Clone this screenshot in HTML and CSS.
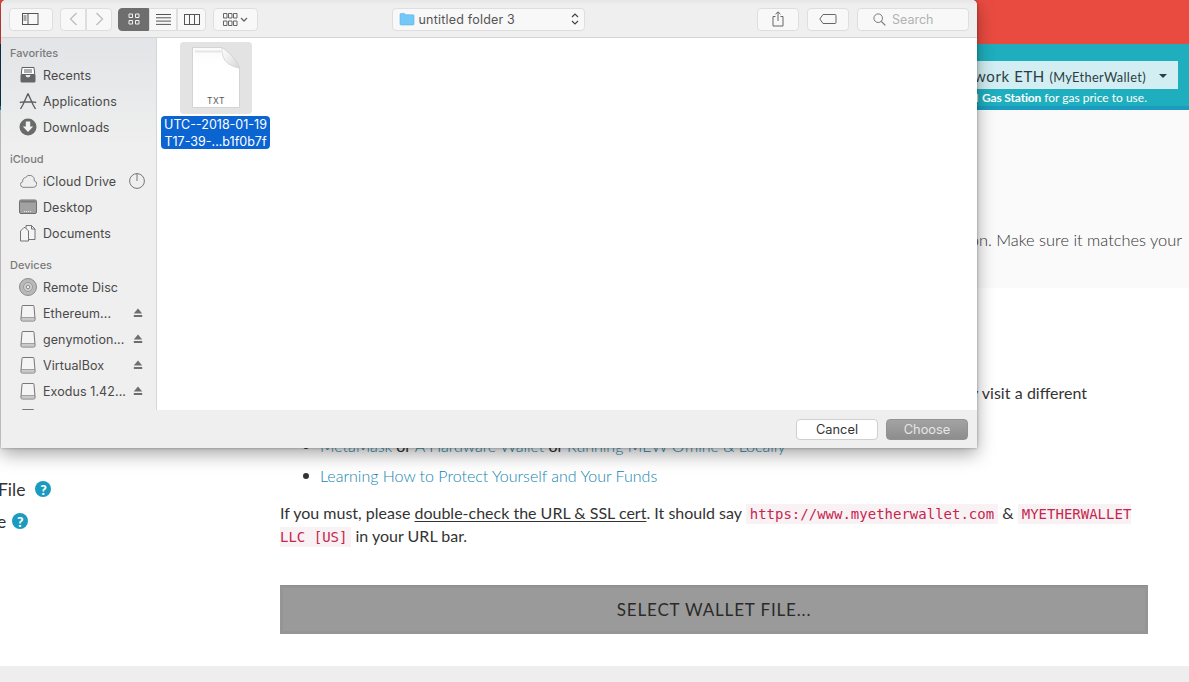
FILE: index.html
```html
<!DOCTYPE html>
<html lang="en">
<head>
<meta charset="utf-8">
<title>MyEtherWallet - Choose file</title>
<link rel="stylesheet" href="styles.css">
</head>
<body>
<svg class="defs" width="0" height="0" aria-hidden="true">
  <symbol id="disk" viewBox="0 0 18 18">
    <path d="M4 1.500h10a1 1 0 0 1 1 1l1.100 13a1.500 1.500 0 0 1-1.500 1.500H3.400a1.500 1.500 0 0 1-1.500-1.500l1.100-13a1 1 0 0 1 1-1z" fill="#f4f4f4" stroke="#777" stroke-width="1"/>
    <path d="M2 13.500h14M2 15h14" stroke="#8a8a8a" stroke-width=".8" fill="none"/>
  </symbol>
  <symbol id="eject" viewBox="0 0 10 10">
    <path d="M5 .5 9.200 5.600H.8z" fill="#6e6e6e"/><rect x=".8" y="7" width="8.400" height="2" fill="#6e6e6e"/>
  </symbol>
</svg>

<div class="page">
  <header class="top-red"></header>
  <section class="band">
    <div class="network"><span class="network-name">Network ETH <small>(MyEtherWallet)</small></span><span class="caret"></span></div>
    <p class="gas">Visit ETH <b>Gas Station</b> for gas price to use.</p>
  </section>
  <section class="notice">
    <p>Always check the URL of this application. Make sure it matches your</p>
  </section>
  <main class="main">
    <div class="options">
      <div class="option first">File <span class="help">?</span></div>
      <div class="option second">e <span class="help">?</span></div>
    </div>
    <div class="warning">
      <h4 class="warning-title">This is not a recommended way to access your wallet.</h4>
      <p class="warning-lead">Entering your private key on a website is dangerous. If a website is compromised or you accidentally visit a different website, your funds will be stolen. Please consider:</p>
      <ul class="warning-list">
        <li><a href="#">MetaMask</a> or <a href="#">A Hardware Wallet</a> or <a href="#">Running MEW Offline &amp; Locally</a></li>
        <li><a href="#">Learning How to Protect Yourself and Your Funds</a></li>
      </ul>
      <p class="warning-note">If you must, please <u>double-check the URL &amp; SSL cert</u>. It should say <code>https://www.myetherwallet.com</code> &amp; <code>MYETHERWALLET LLC [US]</code> in your URL bar.</p>
      <button class="select-file" type="button">SELECT WALLET FILE...</button>
    </div>
  </main>
  <footer class="foot"></footer>
</div>

<div class="dialog">
  <div class="toolbar">
    <div class="tool-left">
      <button class="tb sidebar-toggle" type="button"><svg width="18" height="13" viewBox="0 0 18 13"><rect x=".5" y=".5" width="15.500" height="11" fill="none" stroke="#555"/><path d="M6 .5v11M1.500 3h3M1.500 5h3M1.500 7h3" stroke="#555" fill="none"/></svg></button>
      <div class="tb-group nav">
        <button class="tb seg" type="button"><svg width="9" height="14" viewBox="0 0 9 14"><path d="M7.500 1 1.500 7l6 6" fill="none" stroke="#bdbdbd" stroke-width="1.300"/></svg></button>
        <button class="tb seg" type="button"><svg width="9" height="14" viewBox="0 0 9 14"><path d="M1.500 1l6 6-6 6" fill="none" stroke="#bdbdbd" stroke-width="1.300"/></svg></button>
      </div>
      <div class="tb-group view">
        <button class="tb seg active" type="button"><svg width="12" height="12" viewBox="0 0 12 12"><path d="M1 1h3.500v3.500H1zM7.500 1H11v3.500H7.500zM1 7.500h3.500V11H1zM7.500 7.500H11V11H7.500z" fill="none" stroke="#f2f2f2"/></svg></button>
        <button class="tb seg list" type="button"><svg width="15" height="11" viewBox="0 0 15 11"><path d="M0 .5h15M0 3.800h15M0 7.100h15M0 10.400h15" stroke="#555" fill="none"/></svg></button>
        <button class="tb seg cols" type="button"><svg width="16" height="11" viewBox="0 0 16 11"><rect x=".5" y=".5" width="15" height="10" fill="none" stroke="#555"/><path d="M5.500 .5v10M10.500 .5v10" stroke="#555" fill="none"/></svg></button>
      </div>
      <button class="tb arrange" type="button"><svg width="25" height="13" viewBox="0 0 25 13"><path d="M.5 .5h3.500v4.500H.5zM5.500 .5H9v4.500H5.500zM10.500 .5H14v4.500h-3.500zM.5 8h3.500v4.500H.5zM5.500 8H9v4.500H5.500zM10.500 8H14v4.500h-3.500z" fill="none" stroke="#666"/><path d="M18 5l3 3 3-3" fill="none" stroke="#666" stroke-width="1.300"/></svg></button>
    </div>
    <button class="tb path" type="button">
      <svg width="16" height="14" viewBox="0 0 16 14"><path d="M1 2.500a1 1 0 0 1 1-1h3.500l1.300 1.300H14a1 1 0 0 1 1 1V12a1 1 0 0 1-1 1H2a1 1 0 0 1-1-1z" fill="#74c8f7" stroke="#5ab1e2" stroke-width=".6"/></svg>
      <span class="path-name">untitled folder 3</span>
      <svg class="updown" width="8" height="14" viewBox="0 0 8 14"><path d="M1 5l3-3 3 3M1 9l3 3 3-3" fill="none" stroke="#444" stroke-width="1.200"/></svg>
    </button>
    <div class="tool-right">
      <button class="tb share" type="button"><svg width="12" height="16" viewBox="0 0 12 16"><path d="M3.500 5.500H1v9.500h10V5.500H8.500M6 10V1M3.500 3.200 6 .8l2.500 2.400" fill="none" stroke="#666"/></svg></button>
      <button class="tb tag" type="button"><svg width="18" height="10" viewBox="0 0 18 10"><path d="M4 .5h12a1 1 0 0 1 1 1v7a1 1 0 0 1-1 1H4L.8 5z" fill="none" stroke="#666"/></svg></button>
      <div class="tb search"><svg width="13" height="13" viewBox="0 0 13 13"><circle cx="5.200" cy="5.200" r="4.300" fill="none" stroke="#777"/><path d="M8.300 8.300 12.300 12.300" stroke="#777" stroke-width="1.200"/></svg><span>Search</span></div>
    </div>
  </div>

  <div class="browser">
    <nav class="sidebar">
      <h5 class="side-head">Favorites</h5>
      <div class="side-item"><svg class="si" viewBox="0 0 18 18"><path d="M3 1.500h12l.8 7H2.200z" fill="#fff" stroke="#5f5f5f"/><path d="M5 4h8M5 6h8" stroke="#5f5f5f"/><path d="M1.500 9h5a2.500 2.500 0 0 0 5 0h5v6a1.500 1.500 0 0 1-1.500 1.500H3A1.500 1.500 0 0 1 1.500 15z" fill="#666"/></svg><span>Recents</span></div>
      <div class="side-item"><svg class="si" viewBox="0 0 18 18"><path d="M9 1.500 3.800 13M9 1.500 14.200 13M.8 10.500c3-1 3.700-.8 5.200-.5h6c1.500-.3 2.200-.5 5.200.5M3.800 13 1.500 17M14.200 13l2.300 4" fill="none" stroke="#5f5f5f" stroke-width="1.400"/></svg><span>Applications</span></div>
      <div class="side-item"><svg class="si" viewBox="0 0 18 18"><circle cx="9" cy="9" r="8.500" fill="#6a6a6a"/><path d="M6.800 3.500h4.400v5h3L9 14 3.800 8.500h3z" fill="#f2f2f2"/></svg><span>Downloads</span></div>

      <h5 class="side-head">iCloud</h5>
      <div class="side-item"><svg class="si cloud" viewBox="0 0 18 14"><path d="M4 13.300h10.300a3.300 3.300 0 0 0 .9-6.500A4.700 4.700 0 0 0 6.600 3.500 3.200 3.200 0 0 0 3.800 7.600 2.900 2.900 0 0 0 4 13.300z" fill="none" stroke="#777" stroke-width=".9"/></svg><span class="grow">iCloud Drive</span><svg class="pie" width="16" height="16" viewBox="0 0 16 16"><circle cx="8" cy="8" r="7.400" fill="none" stroke="#777"/><path d="M8 .6V8" stroke="#777"/></svg></div>
      <div class="side-item"><svg class="si" viewBox="0 0 18 18"><rect x=".5" y="2" width="17" height="13.500" rx="1.500" fill="#a2a2a2" stroke="#6f6f6f"/><rect x="1.500" y="3" width="15" height="1.500" fill="#7a7a7a"/><path d="M5 13.500h8" stroke="#e6e6e6" stroke-dasharray="1 1"/></svg><span>Desktop</span></div>
      <div class="side-item"><svg class="si" viewBox="0 0 18 18"><path d="M7 5.500V1.500h5.500L16 5v10.500H9.500" fill="#f4f4f4" stroke="#666" stroke-width=".9"/><path d="M12.500 1.500V5H16" fill="none" stroke="#666" stroke-width=".9"/><path d="M5 3.500h1l3.500 3.500v10h-8V7z" fill="#f4f4f4" stroke="#666" stroke-width=".9"/></svg><span>Documents</span></div>

      <h5 class="side-head">Devices</h5>
      <div class="side-item"><svg class="si" viewBox="0 0 18 18"><circle cx="9" cy="9" r="8.500" fill="#b9b9b9" stroke="#8a8a8a"/><circle cx="9" cy="9" r="4.500" fill="#cfcfcf" stroke="#999"/><circle cx="9" cy="9" r="1.800" fill="#eee" stroke="#888"/></svg><span>Remote Disc</span></div>
      <div class="side-item"><svg class="si"><use href="#disk"/></svg><span class="grow">Ethereum...</span><svg class="ej"><use href="#eject"/></svg></div>
      <div class="side-item"><svg class="si"><use href="#disk"/></svg><span class="grow">genymotion...</span><svg class="ej"><use href="#eject"/></svg></div>
      <div class="side-item"><svg class="si"><use href="#disk"/></svg><span class="grow">VirtualBox</span><svg class="ej"><use href="#eject"/></svg></div>
      <div class="side-item"><svg class="si"><use href="#disk"/></svg><span class="grow">Exodus 1.42...</span><svg class="ej"><use href="#eject"/></svg></div>
      <div class="side-item"><svg class="si"><use href="#disk"/></svg></div>
    </nav>
    <div class="files">
      <div class="file">
        <div class="thumb">
          <svg width="48" height="61" viewBox="0 0 48 61">
            <defs>
              <linearGradient id="fold" x1="0" y1="0" x2="1" y2="1"><stop offset="0" stop-color="#fff"/><stop offset="1" stop-color="#d8d8d8"/></linearGradient>
              <linearGradient id="sheet" x1="0" y1="0" x2="0" y2="1"><stop offset="0" stop-color="#fafafa"/><stop offset=".3" stop-color="#fff"/></linearGradient>
            </defs>
            <path d="M.5.500H30C37 5 44 12 47.500 21V60.500H.5z" fill="url(#sheet)" stroke="#d4d4d4"/>
            <path d="M3 4.500h26" stroke="#e6e6e6" stroke-width="2"/>
            <path d="M30 .5C30 10 32 18 47.500 21 44 12 37 5 30 .5z" fill="url(#fold)" stroke="#cfcfcf" stroke-width=".8"/>
            <text class="txt" x="24" y="57" text-anchor="middle">TXT</text>
          </svg>
        </div>
        <div class="file-name">UTC--2018-01-19<br>T17-39-...b1f0b7f</div>
      </div>
    </div>
  </div>

  <div class="actions">
    <button class="btn cancel" type="button">Cancel</button>
    <button class="btn choose" type="button">Choose</button>
  </div>
</div>
</body>
</html>
```

FILE: styles.css
```css
* { box-sizing: border-box; }
html, body { margin: 0; padding: 0; }
body {
  width: 1189px;
  height: 682px;
  overflow: hidden;
  background: #fff;
  font-family: "Lato", "Liberation Sans", sans-serif;
  color: #333;
  position: relative;
}
.defs { position: absolute; }

/* underlying page */
.page { display: flex; flex-direction: column; height: 682px; }
.top-red { height: 44px; background: #ea4b41; }
.band {
  height: 66px;
  background: linear-gradient(90deg, #123d58 0, #1eaebd 600px);
  border-bottom: 4px solid #1a9bc0;
  display: flex;
  flex-direction: column;
  align-items: flex-end;
  padding: 17px 11px 0 0;
}
.network {
  height: 29px;
  width: 300px;
  background: #d2eef2;
  display: flex;
  align-items: center;
  justify-content: flex-end;
  padding: 1px 11px 0 0;
  font-size: 15px;
  letter-spacing: .6px;
  color: #2c3e44;
}
.network small { font-size: 12.800px; letter-spacing: .35px; }
.caret {
  margin-left: 13px;
  border-top: 4px solid #2c3e44;
  border-left: 4px solid transparent;
  border-right: 4px solid transparent;
}
.gas { margin: 1px 31px 0 0; font-size: 12px; color: #fff; line-height: 16px; }
.gas b { letter-spacing: -.15px; }
.notice {
  height: 178px;
  background: #fafafa;
  padding: 119px 7px 0 0;
  text-align: right;
}
.notice p { margin: 0; font-size: 16.400px; line-height: 22px; white-space: nowrap; color: #333; font-weight: 300; }
.main {
  height: 378px;
  display: grid;
  grid-template-columns: 280px 868px;
}
.options { padding-top: 189px; overflow: hidden; }
.option { font-size: 17.500px; display: flex; align-items: center; gap: 10px; height: 24px; color: #333; }
.option.first { margin-left: -2px; }
.option.second { margin-top: 8px; margin-left: -3px; gap: 6px; }
.help {
  width: 16px; height: 16px; border-radius: 50%;
  background: #1a9bc0; color: #fff;
  font-size: 14px; font-weight: 900;
  display: inline-flex; align-items: center; justify-content: center;
}
.warning { padding-top: 54px; font-size: 16px; line-height: 22px; color: #333; }
.warning-title { margin: 0 0 18px; font-size: 16px; line-height: 22px; }
.warning-lead { margin: 0; max-width: 823px; word-spacing: .15px; }
.warning-list { margin: 9px 0 15px; padding-left: 40px; list-style: none; }
.warning-list li { position: relative; margin-bottom: 8px; }
.warning-list li:last-child { margin-bottom: 0; }
.warning-list li::before {
  content: "";
  position: absolute;
  left: -17px;
  top: 8px;
  width: 6px;
  height: 6px;
  border-radius: 50%;
  background: #333;
}
.warning-list a { color: #1586ae; text-decoration: none; font-weight: 300; }
.warning-note { margin: 0; }
.warning-note u { text-underline-offset: 2px; }
code {
  font-family: "DejaVu Sans Mono", monospace;
  font-size: 14px;
  color: #c7254e;
  background: #f9f2f4;
  padding: 2px 4px;
}
.select-file {
  display: block;
  width: 100%;
  height: 49px;
  margin-top: 37px;
  background: #9a9a9a;
  border: 0;
  box-shadow: inset 0 1px 0 #8e8e8e, inset 0 0 0 3px #959595;
  color: #2a2a2a;
  font-family: "Lato", sans-serif;
  font-size: 17px;
  letter-spacing: .85px;
}
.foot { height: 16px; background: #eee; }

/* file dialog */
.dialog {
  position: absolute;
  left: 1px;
  top: 0;
  width: 976px;
  height: 448px;
  display: flex;
  flex-direction: column;
  border-radius: 5px 5px 0 0;
  overflow: hidden;
  background: #efefef;
  font-family: "Inter", "Liberation Sans", sans-serif;
  color: #4a4a4a;
  box-shadow: 0 6px 18px rgba(0, 0, 0, .35), 0 0 3px rgba(0, 0, 0, .35);
}
.toolbar {
  height: 38px;
  flex: none;
  display: grid;
  grid-template-columns: 1fr 193px 1fr;
  align-items: center;
  background: linear-gradient(#e6e6e6 0, #efefef 5px);
  border-bottom: 1px solid #d4d4d4;
  padding: 1px 8px 0;
}
.tool-left { display: flex; align-items: center; }
.tool-right { display: flex; align-items: center; justify-content: flex-end; gap: 8px; }
.tb {
  height: 23px;
  padding: 0;
  display: flex;
  align-items: center;
  justify-content: center;
  background: #f8f8f8;
  border: 1px solid #dedede;
  border-radius: 4px;
  font: inherit;
  color: inherit;
}
.sidebar-toggle { width: 44px; margin-right: 7px; }
.tb-group { display: flex; }
.seg { border-radius: 0; }
.seg:first-child { border-radius: 4px 0 0 4px; }
.seg:last-child { border-radius: 0 4px 4px 0; }
.nav { margin-right: 6px; }
.nav .seg { width: 26px; }
.view { margin-right: 7px; }
.seg.active { width: 31px; background: #6e6e6e; border-color: #6e6e6e; }
.seg.list { width: 28px; }
.seg.cols { width: 29px; }
.arrange { width: 45px; }
.path {
  width: 193px;
  margin-left: -1px;
  justify-content: flex-start;
  padding: 0 5px 0 6px;
  font-size: 12.500px;
  letter-spacing: .2px;
  gap: 4px;
  color: #555;
}
.path-name { flex: 1; text-align: left; }
.share, .tag { width: 42px; }
.search {
  width: 112px;
  gap: 6px;
  justify-content: flex-start;
  padding-left: 15px;
  font-size: 12.500px;
  color: #b2b2b2;
}
.browser { flex: 1; display: flex; min-height: 0; background: #fff; }
.sidebar {
  width: 156px;
  flex: none;
  overflow: hidden;
  background: linear-gradient(#e2e4e7 0, #efefef 110px);
  border-right: 1px solid #d6d6d6;
  padding-top: 6px;
}
.side-head {
  margin: 0;
  height: 18px;
  padding-left: 9px;
  font-size: 11px;
  line-height: 18px;
  font-weight: 500;
  color: #7a7a7a;
}
.side-item {
  height: 26px;
  display: flex;
  align-items: center;
  padding: 0 13px 0 18px;
  font-size: 12.500px;
  letter-spacing: .08px;
  color: #4a4a4a;
}
.side-item + .side-head { margin-top: 10px; }
.si { width: 18px; height: 18px; margin-right: 6px; flex: none; }
.grow { flex: 1; white-space: nowrap; }
.ej { width: 10px; height: 10px; flex: none; }
.pie { margin-right: -2px; flex: none; }
.files { flex: 1; padding: 4px 0 0 4px; }
.file { width: 109px; display: flex; flex-direction: column; align-items: center; }
.thumb {
  width: 72px; height: 72px;
  background: #e3e3e3;
  border-radius: 4px;
  display: flex;
  align-items: flex-start;
  justify-content: center;
  padding-top: 5px;
}
.txt { font-family: "Inter", sans-serif; font-size: 8.500px; fill: #555; letter-spacing: .6px; }
.file-name {
  width: 109px;
  margin-top: 2px;
  height: 33px;
  background: #0a64d2;
  border-radius: 4px;
  color: #fff;
  font-size: 12.500px;
  line-height: 17px;
  text-align: center;
  white-space: nowrap;
}
.actions {
  height: 38px;
  flex: none;
  background: #efefef;
  display: flex;
  justify-content: flex-end;
  gap: 8px;
  padding: 9px 9px 0 0;
}
.btn {
  width: 82px;
  height: 21px;
  padding: 0;
  border-radius: 4px;
  font-family: inherit;
  font-size: 12.800px;
}
.cancel { background: #fff; border: 1px solid #cfcfcf; color: #333; }
.choose { background: linear-gradient(#a3a3a3, #8d8d8d); border: 1px solid #929292; color: #e6e6e6; }
```
